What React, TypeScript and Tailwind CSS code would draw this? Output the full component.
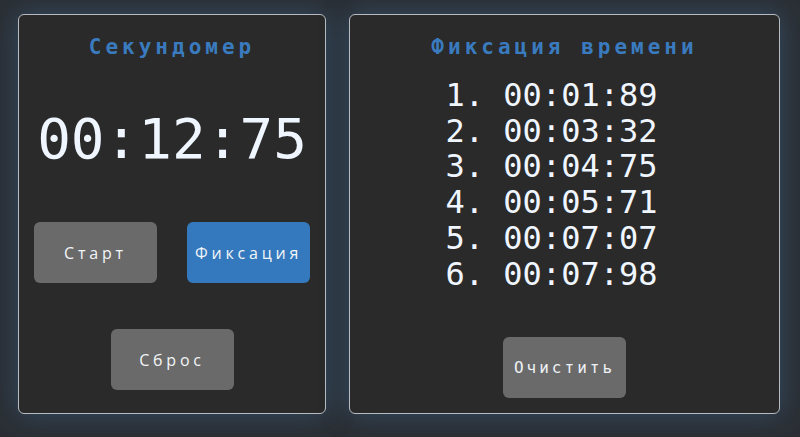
import React, { useState } from 'react';

const mono = "font-['DejaVu_Sans_Mono',monospace]";

const laps = ['00:01:89', '00:03:32', '00:04:75', '00:05:71', '00:07:07', '00:07:98'];

const Btn: React.FC<{ label: string; blue?: boolean; onClick?: () => void }> = ({ label, blue, onClick }) => (
  <button
    onClick={onClick}
    className={`w-[123px] h-[61px] rounded-[6px] text-[16px] font-medium tracking-[3.8px] text-[#f2f5f8] font-['Open_Sans',sans-serif] ${
      blue ? 'bg-[#3479bd]' : 'bg-[#6a6a6a]'
    }`}
  >
    {label}
  </button>
);

export default function App() {
  const [items, setItems] = useState(laps);

  return (
    <div className="w-[800px] h-[437px] bg-[#2b2f35] flex gap-[23px] pl-[18px] pt-[14px]">
      <div className="w-[308px] h-[400px] bg-[#2a2a2a] border-[1.5px] border-[#b8bcc2] rounded-[6px] shadow-[0_0_26px_rgba(56,96,130,0.6)] flex flex-col items-center">
        <h1 className={`${mono} mt-[19px] text-[21px] leading-[26px] font-bold tracking-[4px] text-[#3a7bbf]`}>Секундомер</h1>
        <div className={`${mono} mt-[57px] text-[56px] leading-[44px] text-[#f0f6ff]`}>00:12:75</div>
        <div className="mt-[61px] w-full flex justify-between px-[15px]">
          <Btn label="Старт" />
          <Btn label="Фиксация" blue />
        </div>
        <div className="mt-[46px]">
          <Btn label="Сброс" />
        </div>
      </div>

      <div className="w-[431px] h-[400px] bg-[#2a2a2a] border-[1.5px] border-[#b8bcc2] rounded-[6px] shadow-[0_0_26px_rgba(56,96,130,0.6)] flex flex-col items-center">
        <h2 className={`${mono} mt-[19px] text-[21px] leading-[26px] font-bold tracking-[4px] text-[#3a7bbf]`}>Фиксация времени</h2>
        <ol className={`${mono} mt-[18px] mr-[26px] text-[32px] leading-[35.7px] text-[#f0f6ff]`}>
          {items.map((t, i) => (
            <li key={i}>{`${i + 1}. ${t}`}</li>
          ))}
        </ol>
        <div className="mt-auto mb-[15px]">
          <button
            onClick={() => setItems([])}
            className={`${mono} w-[123px] h-[61px] rounded-[6px] bg-[#6a6a6a] text-[16px] tracking-[3px] text-[#eef2f6]`}
          >
            Очистить
          </button>
        </div>
      </div>
    </div>
  );
}
